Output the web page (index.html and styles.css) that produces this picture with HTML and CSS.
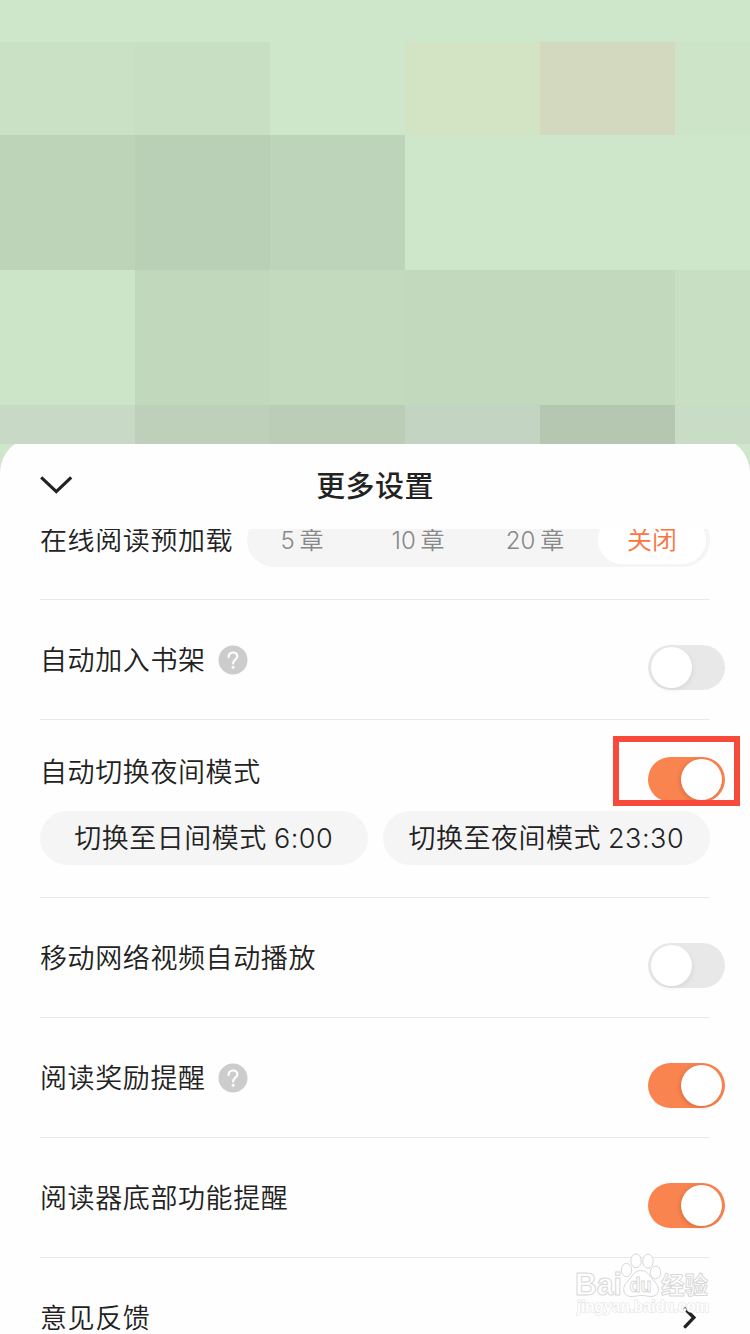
FILE: index.html
```html
<!DOCTYPE html>
<html lang="zh-CN">
<head>
<meta charset="utf-8">
<title>更多设置</title>
<link rel="stylesheet" href="styles.css">
</head>
<body>
<div class="screen">
  <div class="mosaic">
    <i class="base wide"></i>
    <i class="a1"></i><i class="a2"></i><i class="base"></i><i class="a4"></i><i class="a5"></i><i class="a6"></i>
    <i class="b1"></i><i class="b2"></i><i class="b3"></i><i class="base"></i><i class="base"></i><i class="base"></i>
    <i class="c1"></i><i class="c2"></i><i class="c3"></i><i class="c4"></i><i class="c4"></i><i class="c6"></i>
    <i class="d1"></i><i class="d2"></i><i class="d3"></i><i class="d4"></i><i class="d5"></i><i class="d6"></i>
  </div>
  <div class="sheet">
    <header class="header">
      <svg class="down" width="36" height="24" viewBox="0 0 36 24"><path d="M3.2 4.4 18.3 18.6 33.2 4.4"/></svg>
      <h1>更多设置</h1>
    </header>
    <main class="list">
      <section class="row preload">
        <span class="label">在线阅读预加载</span>
        <div class="segments">
          <span>5 章</span><span>10 章</span><span>20 章</span><span class="active">关闭</span>
        </div>
      </section>
      <section class="row">
        <span class="label">自动加入书架</span>
        <svg class="help" width="30" height="30" viewBox="0 0 30 30"><circle cx="15" cy="15" r="14.5"/><path d="M10.6 12.1C10.6 5.9 19.4 6.1 19.4 11.4C19.4 14.4 15.1 14.4 15.1 18.6"/><circle class="dot" cx="15.1" cy="22.3" r="1.5"/></svg>
        <div class="toggle"><b></b></div>
      </section>
      <section class="row night">
        <div class="line">
          <span class="label">自动切换夜间模式</span>
          <div class="toggle on"><b></b></div>
          <div class="highlight"></div>
        </div>
        <div class="chips">
          <span>切换至日间模式 6:00</span>
          <span>切换至夜间模式 23:30</span>
        </div>
      </section>
      <section class="row">
        <span class="label">移动网络视频自动播放</span>
        <div class="toggle"><b></b></div>
      </section>
      <section class="row">
        <span class="label">阅读奖励提醒</span>
        <svg class="help" width="30" height="30" viewBox="0 0 30 30"><circle cx="15" cy="15" r="14.5"/><path d="M10.6 12.1C10.6 5.9 19.4 6.1 19.4 11.4C19.4 14.4 15.1 14.4 15.1 18.6"/><circle class="dot" cx="15.1" cy="22.3" r="1.5"/></svg>
        <div class="toggle on"><b></b></div>
      </section>
      <section class="row">
        <span class="label">阅读器底部功能提醒</span>
        <div class="toggle on"><b></b></div>
      </section>
      <section class="row last">
        <span class="label">意见反馈</span>
        <svg class="next" width="14" height="24" viewBox="0 0 14 24"><path d="M2.2 3 10.8 11.6 2.2 20.6"/></svg>
      </section>
    </main>
  </div>
  <svg class="watermark" width="150" height="74" viewBox="0 0 150 74">
    <g class="paw">
      <ellipse cx="54.5" cy="20" rx="5.2" ry="6.6"/>
      <ellipse cx="64" cy="10.8" rx="5.2" ry="7"/>
      <ellipse cx="76" cy="11.2" rx="5.2" ry="7"/>
      <ellipse cx="83.5" cy="22.5" rx="5.2" ry="6.4"/>
      <path d="M69 20.500C62 20.500 60 27 56 31C49 37 51 46.500 59 46.500C64 46.500 65 45.500 69 45.500C74 45.500 75 46.500 79 46.500C87 46.500 89 38 83 32C78 27 76 20.500 69 20.500Z"/>
    </g>
    <text class="brand" x="3" y="45" textLength="47" lengthAdjust="spacingAndGlyphs">Bai</text>
    <text class="du" x="57.500" y="42" textLength="22" lengthAdjust="spacingAndGlyphs">du</text>
    <text class="cn" x="89" y="43.500" textLength="47" lengthAdjust="spacingAndGlyphs">经验</text>
    <text class="url" x="5" y="61.500" textLength="132" lengthAdjust="spacingAndGlyphs">jingyan.baidu.com</text>
  </svg>
</div>
</body>
</html>
```
FILE: styles.css
```css
* { box-sizing: border-box; }

body {
  margin: 0;
  font-family: Inter, "Noto Sans CJK SC", sans-serif;
  color: #222;
}

.screen {
  position: relative;
  width: 750px;
  height: 1334px;
  overflow: hidden;
  background: #cee6ca;
}

.mosaic {
  display: grid;
  grid-template-columns: repeat(5, 135px) 75px;
  grid-template-rows: 42px 93px 135px 135px 39px;
}
.wide { grid-column: 1 / -1; }
.base { background: #cee6ca; }
.a1 { background: #cae1c6; }
.a2 { background: #c8dfc4; }
.a4 { background: #d2e4c3; }
.a5 { background: #d2d9be; }
.a6 { background: #cde4c9; }
.b1 { background: #bdd4b9; }
.b2 { background: #b9d0b6; }
.b3 { background: #bed4ba; }
.c1 { background: #cce4c8; }
.c2 { background: #c1d8bd; }
.c3 { background: #c3dabf; }
.c4 { background: #c2d9bd; }
.c6 { background: #c8dfc4; }
.d1 { background: #c8dac5; }
.d2 { background: #becfba; }
.d3 { background: #bbccb7; }
.d4 { background: #c4d4c2; }
.d5 { background: #b5c7b1; }
.d6 { background: #c9dcc6; }

.sheet {
  position: relative;
  height: 890px;
  overflow: hidden;
}
.sheet::before {
  content: "";
  position: absolute;
  inset: -7px 0 0;
  border-radius: 36px 36px 0 0;
  background: #fefefe;
}

.header {
  position: relative;
  display: grid;
  grid-template-columns: 1fr auto 1fr;
  align-items: center;
  height: 85px;
  padding: 0 38px 3px;
}
.header h1 {
  margin: 0;
  padding-top: 4px;
  font-size: 29px;
  font-weight: 500;
  line-height: 40px;
  letter-spacing: 0.4px;
}
.down path, .next path {
  fill: none;
  stroke: #222;
  stroke-width: 3.2;
}
.next path { stroke-width: 3.4; stroke-linecap: round; }

.list {
  position: relative;
  height: 805px;
  padding: 0 40px;
  overflow: hidden;
}
.row {
  display: flex;
  align-items: center;
  height: 120px;
  border-bottom: 1px solid #e9e9e9;
}
.label {
  padding-top: 2px;
  font-size: 27px;
  font-weight: 350;
  line-height: 40px;
  letter-spacing: 0.6px;
}
.help { margin: 0 0 0 12px; fill: #ccc; }
.help path { fill: none; stroke: #fff; stroke-width: 2.1; stroke-linecap: round; }
.help .dot { fill: #fff; }

.toggle {
  flex: none;
  width: 77px;
  height: 45px;
  margin: 15px -15px 0 auto;
  padding: 2px 3px;
  border-radius: 23px;
  background: #e8e8e9;
}
.toggle b {
  display: block;
  width: 41px;
  height: 41px;
  border-radius: 50%;
  background: #fff;
  box-shadow: 1px 2px 5px rgba(0, 0, 0, 0.07);
}
.toggle.on { background: #f9844f; }
.toggle.on b { margin-left: 30px; box-shadow: -1px 1px 4px rgba(90, 20, 0, 0.2); }

.preload {
  height: 71px;
  align-items: flex-start;
  justify-content: space-between;
}
.preload .label { margin-top: -10px; }
.segments {
  display: grid;
  grid-template-columns: 110px 122px 112px 119px;
  height: 54px;
  margin-top: -16px;
  border-radius: 27px;
  background: #f5f5f5;
  color: #888;
  font-size: 24px;
  font-weight: 350;
  line-height: 56px;
  text-align: center;
  word-spacing: -2px;
}
.segments .active {
  height: 48px;
  margin: 3px 4px 3px 7px;
  border-radius: 24px;
  background: #fff;
  color: #f9743e;
  font-size: 25px;
  line-height: 49px;
}

.night { display: block; height: 178px; }
.line {
  position: relative;
  display: flex;
  align-items: center;
  height: 91px;
  padding-top: 13px;
}
.line .toggle { margin-top: 14px; }
.highlight {
  position: absolute;
  top: 16px;
  right: -30px;
  width: 127px;
  height: 70px;
  border: 6px solid #f74a3b;
}
.chips {
  display: flex;
  gap: 15px;
}
.chips span {
  flex: 1;
  height: 54px;
  border-radius: 27px;
  background: #f5f5f5;
  font-size: 27px;
  font-weight: 350;
  line-height: 56px;
  letter-spacing: 0.5px;
  word-spacing: -1px;
  text-align: center;
  white-space: nowrap;
}
.last { border: 0; }
.next { margin: 0 13px 0 auto; }

.watermark {
  position: absolute;
  left: 572px;
  top: 1250px;
  overflow: visible;
}
.watermark text, .paw {
  fill: #fff;
  stroke: #d8d8d8;
  stroke-width: 1;
  font-family: "Liberation Sans", "Noto Sans CJK SC", sans-serif;
  font-weight: 700;
}
.watermark .brand { font-size: 31px; }
.watermark .du { font-size: 20px; }
.watermark .cn { font-size: 24px; }
.watermark .url { font-size: 16.5px; stroke-width: 1.2; stroke: #e2e2e2; paint-order: stroke; }
```
